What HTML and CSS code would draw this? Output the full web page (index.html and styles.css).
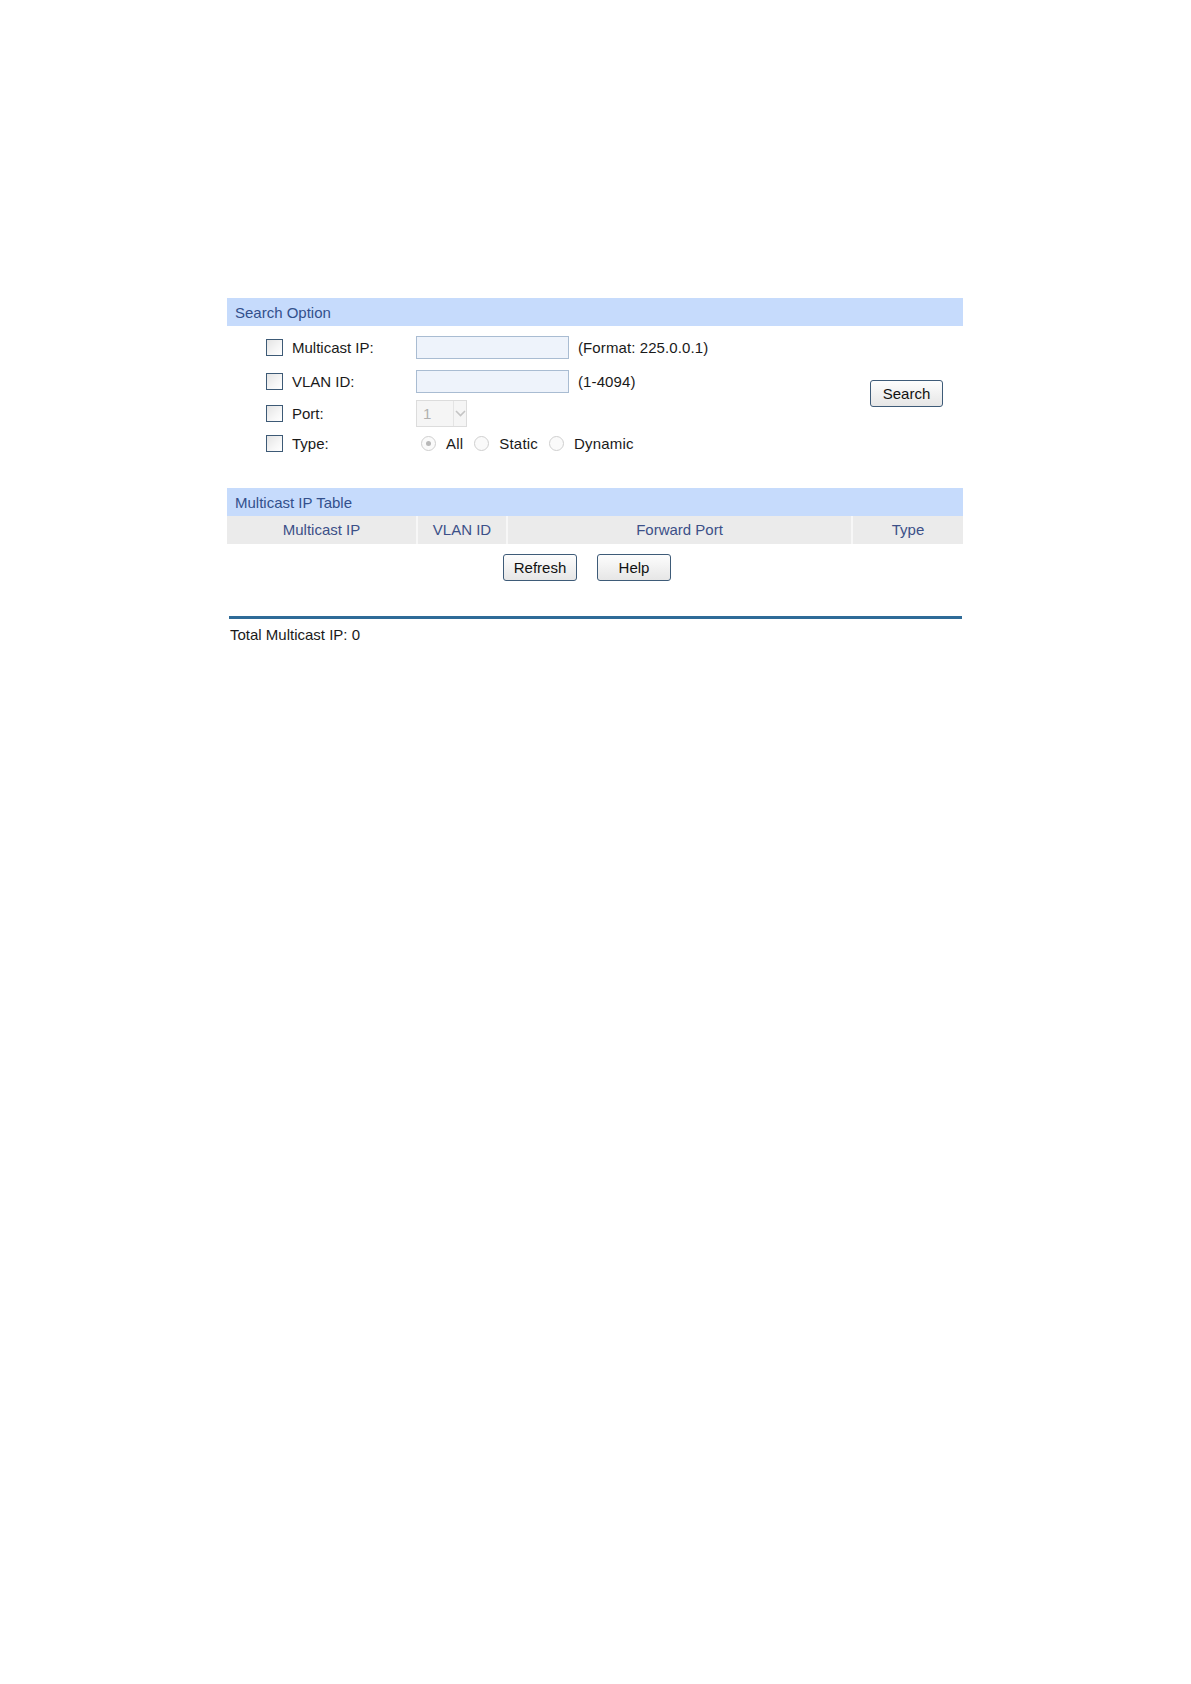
FILE: index.html
```html
<!DOCTYPE html>
<html>
<head>
<meta charset="utf-8">
<link rel="stylesheet" href="styles.css">
</head>
<body>
<div class="page">
  <div class="bar">Search Option</div>
  <div class="search">
    <div class="rows">
      <div class="row r1">
        <span class="cb"></span><span class="label">Multicast IP:</span>
        <span class="input"></span><span class="hint">(Format: 225.0.0.1)</span>
      </div>
      <div class="row r2">
        <span class="cb"></span><span class="label">VLAN ID:</span>
        <span class="input"></span><span class="hint">(1-4094)</span>
      </div>
      <div class="row r3">
        <span class="cb"></span><span class="label">Port:</span>
        <span class="select"><span class="sel-val">1</span><span class="sel-arrow"><svg width="11" height="7" viewBox="0 0 11 7"><path d="M1 1 L5.5 5.5 L10 1" fill="none" stroke="#c4c4c4" stroke-width="1.6"/></svg></span></span>
      </div>
      <div class="row r4">
        <span class="cb"></span><span class="label">Type:</span>
        <span class="radios">
          <span class="radio checked"></span><span class="rlabel">All</span>
          <span class="radio"></span><span class="rlabel">Static</span>
          <span class="radio"></span><span class="rlabel">Dynamic</span>
        </span>
      </div>
    </div>
    <div class="search-btn-wrap"><span class="btn search-btn">Search</span></div>
  </div>
  <div class="bar">Multicast IP Table</div>
  <div class="thead">
    <div class="th c1">Multicast IP</div>
    <div class="th c2">VLAN ID</div>
    <div class="th c3">Forward Port</div>
    <div class="th c4">Type</div>
  </div>
  <div class="actions">
    <span class="btn">Refresh</span>
    <span class="btn">Help</span>
  </div>
  <div class="rule"></div>
  <div class="total">Total Multicast IP: 0</div>
</div>
</body>
</html>
```
FILE: styles.css
```css
html, body {
  margin: 0;
  padding: 0;
  background: #ffffff;
}
body {
  font-family: "Liberation Sans", Arial, sans-serif;
  font-size: 15px;
  color: #1a1a1a;
}
.page {
  width: 736px;
  margin-left: 227px;
  padding-top: 298px;
}
.bar {
  height: 28px;
  line-height: 29px;
  background: #c6dbfc;
  color: #33508c;
  padding-left: 8px;
}
.search {
  display: flex;
  padding-top: 5px;
  padding-bottom: 29px;
}
.rows {
  flex: 1;
  display: flex;
  flex-direction: column;
}
.row {
  display: flex;
  align-items: center;
  padding-left: 39px;
}
.r1 { height: 32px; }
.r2 { height: 36px; }
.r3 { height: 28px; }
.r4 { height: 32px; }
.cb {
  width: 15px;
  height: 15px;
  border: 1px solid #3d5a76;
  background: linear-gradient(135deg, #e4e4e4 0%, #f6f6f6 60%, #ffffff 100%);
  flex: none;
}
.label {
  margin-left: 9px;
  width: 124px;
  flex: none;
}
.input {
  width: 151px;
  height: 21px;
  border: 1px solid #a9bcd2;
  background: #eef3fb;
  flex: none;
}
.hint {
  margin-left: 9px;
  letter-spacing: 0.1px;
}
.select {
  display: flex;
  width: 49px;
  height: 25px;
  border: 1px solid #dcdcdc;
  background: #f5f5f5;
  flex: none;
}
.sel-val {
  width: 30px;
  padding-left: 6px;
  line-height: 25px;
  color: #b0b0b0;
}
.sel-arrow {
  flex: 1;
  display: flex;
  align-items: center;
  justify-content: center;
  border-left: 1px solid #e4e4e4;
}
.radios {
  display: flex;
  align-items: center;
  margin-left: 5px;
}
.radio {
  width: 13px;
  height: 13px;
  border: 1px solid #cfcfcf;
  border-radius: 50%;
  background: #fafafa;
  position: relative;
  flex: none;
}
.radio.checked::after {
  content: "";
  position: absolute;
  left: 4px;
  top: 4px;
  width: 5px;
  height: 5px;
  border-radius: 50%;
  background: #b8b8b8;
}
.rlabel {
  margin-left: 10px;
  margin-right: 11px;
  letter-spacing: 0.2px;
}
.search-btn-wrap {
  display: flex;
  align-items: center;
  padding-right: 20px;
  padding-bottom: 3px;
}
.btn {
  display: inline-flex;
  align-items: center;
  justify-content: center;
  width: 72px;
  height: 25px;
  border: 1px solid #3e5b78;
  border-radius: 3px;
  background: linear-gradient(#fdfdfd, #e6e6e6);
  color: #111;
  box-sizing: content-box;
}
.search-btn {
  width: 71px;
}
.thead {
  display: flex;
  height: 28px;
  background: #ebebeb;
}
.th {
  line-height: 28px;
  text-align: center;
  color: #3c5088;
  border-right: 2px solid #f7f7f7;
}
.c1 { width: 189px; }
.c2 { width: 88px; }
.c3 { width: 343px; }
.c4 { flex: 1; border-right: none; }
.actions {
  display: flex;
  justify-content: center;
  gap: 20px;
  padding-top: 10px;
  padding-right: 16px;
}
.rule {
  margin-top: 35px;
  height: 3px;
  background: #2f6b98;
  margin-left: 2px;
  margin-right: 1px;
}
.total {
  margin-top: 6px;
  padding-left: 3px;
  line-height: 20px;
}
```
